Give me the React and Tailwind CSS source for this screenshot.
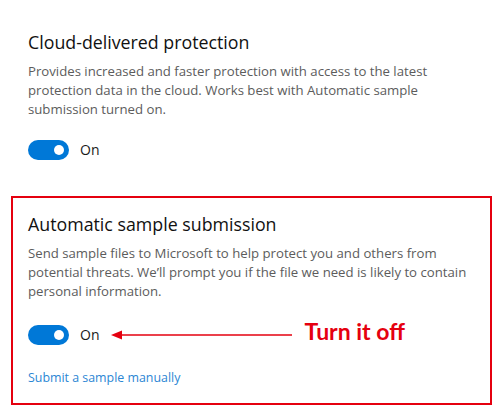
import React from "react";

const Toggle = () => (
    <div className="flex items-center">
        <div className="w-[41px] h-[20px] rounded-full bg-[#0078d7] flex items-center justify-end pr-[5px]">
            <div className="w-[10px] h-[10px] rounded-full bg-white" />
        </div>
        <span className="ml-[11px] text-[14px] leading-[20px] text-[#1a1a1a]">On</span>
    </div>
);

const ArrowLeft = () => (
    <svg width="182" height="12" viewBox="0 0 182 12" className="block">
        <line x1="8" y1="6" x2="181" y2="6" stroke="#e5000f" strokeWidth="1.5" />
        <polygon points="0,6 11,1.5 11,10.5" fill="#e5000f" />
    </svg>
);

export default function App() {
    return (
        <div
            className="w-[500px] h-[420px] bg-white overflow-hidden"
            style={{ fontFamily: '"Open Sans", "Noto Sans", sans-serif' }}
        >
            {/* Cloud-delivered protection */}
            <div className="pl-[28px] pt-[29px]">
                <h2 className="text-[17.8px] leading-[26px] text-[#111]">
                    Cloud-delivered protection
                </h2>
                <p className="mt-[7px] w-[420px] text-[13.2px] leading-[19px] text-[#5c5c5c]">
                    Provides increased and faster protection with access to the latest
                    protection data in the cloud. Works best with Automatic sample
                    submission turned on.
                </p>
                <div className="mt-[21px]">
                    <Toggle />
                </div>
            </div>

            {/* Automatic sample submission */}
            <div className="ml-[11px] mt-[36px] w-[481px] h-[209px] border-2 border-[#e5000f] pl-[15px] pt-[13px]">
                <h2 className="text-[17.8px] leading-[26px] text-[#111]">
                    Automatic sample submission
                </h2>
                <p className="mt-[7px] w-[455px] text-[13.2px] leading-[19px] text-[#5c5c5c]">
                    Send sample files to Microsoft to help protect you and others from
                    potential threats. We’ll prompt you if the file we need is likely to contain
                    personal information.
                </p>
                <div className="mt-[24px] flex items-center">
                    <Toggle />
                    <div className="ml-[12px]">
                        <ArrowLeft />
                    </div>
                    <span
                        className="ml-[11px] -mt-[9px] text-[23px] leading-[26px] font-bold text-[#e5000f]"
                        style={{ fontFamily: '"Lato", "Open Sans", sans-serif' }}
                    >
                        Turn it off
                    </span>
                </div>
                <div className="mt-[23px] text-[12.4px] leading-[20px] text-[#2b86d4]">
                    Submit a sample manually
                </div>
            </div>
        </div>
    );
}
